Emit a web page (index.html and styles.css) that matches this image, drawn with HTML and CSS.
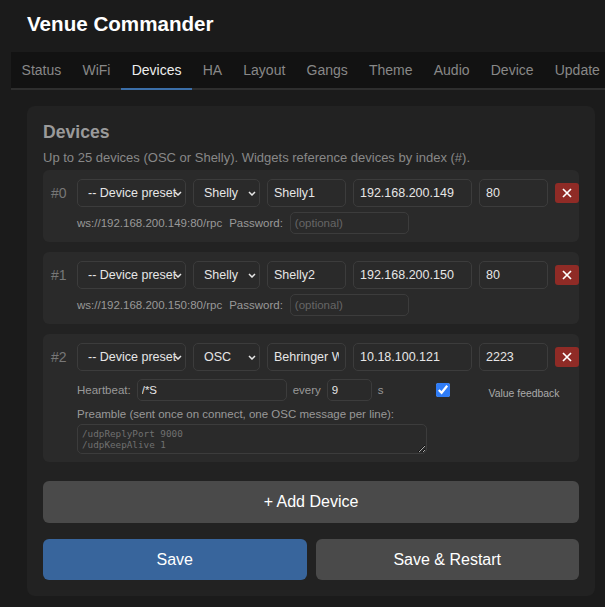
FILE: index.html
```html
<!DOCTYPE html>
<html>
<head>
    <title>Venue Commander</title>
    <link rel="stylesheet" href="styles.css">
</head>
<body>
    <h1 class="app-title">Venue Commander</h1>

    <nav class="tabs">
        <a class="tab">Status</a>
        <a class="tab">WiFi</a>
        <a class="tab active">Devices</a>
        <a class="tab">HA</a>
        <a class="tab">Layout</a>
        <a class="tab">Gangs</a>
        <a class="tab">Theme</a>
        <a class="tab">Audio</a>
        <a class="tab">Device</a>
        <a class="tab">Update</a>
    </nav>

    <div class="panel">
        <h2>Devices</h2>
        <p class="hint">Up to 25 devices (OSC or Shelly). Widgets reference devices by index (#).</p>

        <!-- device 0 -->
        <div class="device">
            <div class="device-main">
                <span class="idx">#0</span>
                <div class="select-wrap preset">
                    <select><option>-- Device preset --</option></select>
                    <svg class="chevron" width="8" height="5" viewBox="0 0 8 5"><polyline points="1,1 4,4 7,1"/></svg>
                </div>
                <div class="select-wrap kind">
                    <select><option>Shelly</option><option>OSC</option></select>
                    <svg class="chevron" width="8" height="5" viewBox="0 0 8 5"><polyline points="1,1 4,4 7,1"/></svg>
                </div>
                <input class="field name" value="Shelly1">
                <input class="field host" value="192.168.200.149">
                <input class="field port" value="80">
                <button class="del"><svg width="10" height="10" viewBox="0 0 10 10"><path d="M1 1L9 9M9 1L1 9"/></svg></button>
            </div>
            <div class="device-sub">
                <span class="note">ws://192.168.200.149:80/rpc</span>
                <span class="note">Password:</span>
                <input class="field small pass" placeholder="(optional)">
            </div>
        </div>

        <!-- device 1 -->
        <div class="device">
            <div class="device-main">
                <span class="idx">#1</span>
                <div class="select-wrap preset">
                    <select><option>-- Device preset --</option></select>
                    <svg class="chevron" width="8" height="5" viewBox="0 0 8 5"><polyline points="1,1 4,4 7,1"/></svg>
                </div>
                <div class="select-wrap kind">
                    <select><option>Shelly</option><option>OSC</option></select>
                    <svg class="chevron" width="8" height="5" viewBox="0 0 8 5"><polyline points="1,1 4,4 7,1"/></svg>
                </div>
                <input class="field name" value="Shelly2">
                <input class="field host" value="192.168.200.150">
                <input class="field port" value="80">
                <button class="del"><svg width="10" height="10" viewBox="0 0 10 10"><path d="M1 1L9 9M9 1L1 9"/></svg></button>
            </div>
            <div class="device-sub">
                <span class="note">ws://192.168.200.150:80/rpc</span>
                <span class="note">Password:</span>
                <input class="field small pass" placeholder="(optional)">
            </div>
        </div>

        <!-- device 2 -->
        <div class="device">
            <div class="device-main">
                <span class="idx">#2</span>
                <div class="select-wrap preset">
                    <select><option>-- Device preset --</option></select>
                    <svg class="chevron" width="8" height="5" viewBox="0 0 8 5"><polyline points="1,1 4,4 7,1"/></svg>
                </div>
                <div class="select-wrap kind">
                    <select><option>OSC</option><option>Shelly</option></select>
                    <svg class="chevron" width="8" height="5" viewBox="0 0 8 5"><polyline points="1,1 4,4 7,1"/></svg>
                </div>
                <input class="field name" value="Behringer Wing">
                <input class="field host" value="10.18.100.121">
                <input class="field port" value="2223">
                <button class="del"><svg width="10" height="10" viewBox="0 0 10 10"><path d="M1 1L9 9M9 1L1 9"/></svg></button>
            </div>
            <div class="device-sub heartbeat">
                <span class="note">Heartbeat:</span>
                <input class="field small hb-msg" value="/*S">
                <span class="note">every</span>
                <input class="field small hb-secs" value="9">
                <span class="note">s</span>
                <input type="checkbox" class="feedback" checked>
                <span class="fb-label">Value feedback</span>
            </div>
            <div class="preamble">
                <div class="note">Preamble (sent once on connect, one OSC message per line):</div>
                <textarea placeholder="/udpReplyPort 9000&#10;/udpKeepAlive 1"></textarea>
            </div>
        </div>

        <button class="btn add-btn">+ Add Device</button>

        <div class="actions">
            <button class="btn primary">Save</button>
            <button class="btn">Save &amp; Restart</button>
        </div>
    </div>
</body>
</html>
```

FILE: styles.css
```css
body {
    margin: 0;
    background-color: #1b1b1b;
    font-family: "Liberation Sans", Arial, sans-serif;
    color: #ddd;
    overflow: hidden;
}
.app-title {
    margin: 0;
    padding: 12px 0 16px 27px;
    font-size: 20.6px;
    line-height: 24px;
    color: #fff;
}

/* tab strip */
.tabs {
    display: flex;
    margin-left: 11px;
    background-color: #121212;
    border-bottom: 2px solid #2e2e2e;
}
.tab {
    flex-shrink: 0;
    padding: 0 10.6px;
    font-size: 14px;
    line-height: 36px;
    color: #888;
    border-bottom: 2px solid transparent;
    margin-bottom: -2px;
}
.tab.active {
    color: #eee;
    border-bottom-color: #3b6ea8;
}

.panel {
    margin: 16px 10px 0 27px;
    padding: 16px;
    background-color: #222;
    border-radius: 8px;
}
.panel h2 {
    margin: 0;
    font-size: 17.6px;
    line-height: 20px;
    color: #9a9a9a;
}
.hint {
    margin: 8px 0 4px;
    font-size: 13px;
    line-height: 16px;
    color: #888;
}

/* one device row */
.device {
    background-color: #2a2a2a;
    border-radius: 6px;
    padding: 9px 8px 8px;
    margin-bottom: 10px;
}
.device-main {
    display: flex;
    align-items: center;
    gap: 7px;
    height: 28px;
}
.device-main > * {
    flex-shrink: 0;
}
.idx {
    width: 19px;
    font-size: 14px;
    color: #777;
}
.select-wrap {
    position: relative;
    height: 28px;
}
.select-wrap select {
    appearance: none;
    box-sizing: border-box;
    width: 100%;
    height: 28px;
    padding: 0 7px 0 10px;
    background: transparent;
    border: 1px solid #3c3c3c;
    border-radius: 5px;
    color: #e6e6e6;
    font-family: "Liberation Sans", Arial, sans-serif;
    font-size: 12.5px;
    outline: none;
}
.chevron {
    position: absolute;
    right: 4px;
    top: 12px;
    fill: none;
    stroke: #e6e6e6;
    stroke-width: 1.5;
}
.preset { width: 109px; }
.kind { width: 67px; }

.field {
    box-sizing: border-box;
    height: 28px;
    padding: 0 6px;
    background: transparent;
    border: 1px solid #3c3c3c;
    border-radius: 5px;
    color: #e6e6e6;
    font-family: "Liberation Sans", Arial, sans-serif;
    font-size: 12.5px;
    outline: none;
}
.field.small {
    height: 22px;
    font-size: 11.5px;
    padding: 0 4px;
}
.field::placeholder {
    color: #666;
}
.name { width: 79px; }
.host { width: 119px; }
.port { width: 69px; }
.pass { width: 119px; }

.del {
    width: 24px;
    height: 20px;
    padding: 0;
    border: none;
    border-radius: 3px;
    background-color: #8f2b26;
    display: flex;
    align-items: center;
    justify-content: center;
}
.del svg {
    stroke: #fff;
    stroke-width: 1.7;
}

.device-sub {
    display: flex;
    align-items: center;
    gap: 7px;
    height: 22px;
    margin-top: 5px;
    padding-left: 26px;
}
.note {
    font-size: 11.5px;
    line-height: 14px;
    color: #999;
}
.heartbeat {
    gap: 6px;
    margin-top: 8px;
}
.hb-msg { width: 150px; }
.hb-secs { width: 45px; }
.feedback {
    width: 14px;
    height: 14px;
    margin: 0 0 0 46px;
    accent-color: #2f7cf6;
}
.fb-label {
    margin: 6px 0 0 33px;
    font-size: 10.4px;
    color: #aaa;
}
.preamble {
    padding-left: 26px;
    margin-top: 6px;
}
.preamble textarea {
    display: block;
    box-sizing: border-box;
    width: 350px;
    height: 30px;
    margin-top: 3px;
    padding: 3px 4px;
    background: transparent;
    border: 1px solid #3c3c3c;
    border-radius: 5px;
    color: #ddd;
    font-family: "DejaVu Sans Mono", monospace;
    font-size: 9.3px;
    line-height: 11px;
    outline: none;
}
.preamble textarea::placeholder {
    color: #707070;
}

/* buttons */
.btn {
    height: 41px;
    border: none;
    border-radius: 6px;
    background-color: #4a4a4a;
    color: #fff;
    font-family: "Liberation Sans", Arial, sans-serif;
    font-size: 16px;
}
.add-btn {
    display: block;
    width: 100%;
    height: 42px;
    margin-top: 19px;
}
.actions {
    display: flex;
    gap: 9px;
    margin-top: 16px;
}
.actions .btn {
    flex: 1;
}
.btn.primary {
    background-color: #38659c;
}
```
